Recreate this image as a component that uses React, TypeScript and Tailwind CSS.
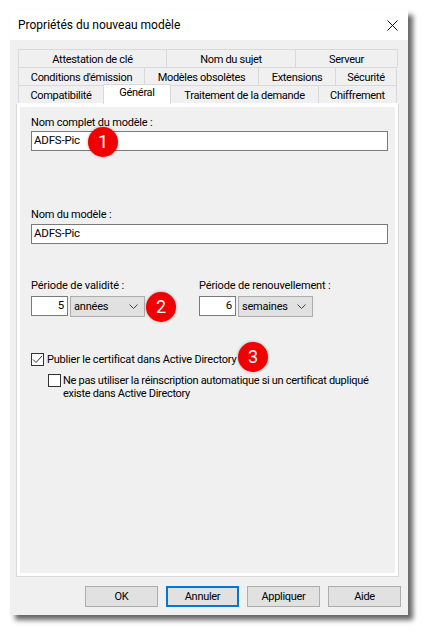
import React from "react";

const Tab = ({ label, w }: { label: string; w: string }) => (
  <div className={`${w} h-[18px] shrink-0 flex items-center justify-center pt-[1px] border-t border-l border-r border-[#d9d9d9] bg-[#f0f0f0] -mr-px text-[11px] tracking-[-0.3px] leading-none text-black`}>
    {label}
  </div>
);

const Badge = ({ n, cls }: { n: number; cls: string }) => (
  <div className={`absolute ${cls} w-[30px] h-[30px] rounded-full bg-[#f00000] text-white flex items-center justify-center text-[18px] tracking-normal leading-none shadow-[0_0_3px_rgba(0,0,0,0.35)]`}>
    {n}
  </div>
);

const Input = ({ value, w, right }: { value: string; w: string; right?: boolean }) => (
  <div className={`${w} h-[20px] border border-[#7a7a7a] bg-white flex items-center ${right ? "justify-end pr-[3px]" : "pl-[2px]"} text-[11.5px] tracking-[-0.2px] leading-none`}>
    {value}
  </div>
);

const Select = ({ value, w }: { value: string; w: string }) => (
  <div className={`${w} h-[21px] border border-[#adadad] bg-[#e1e1e1] flex items-center justify-between pl-[3px] pr-[6px] text-[11px] tracking-[-0.2px] leading-none`}>
    <span>{value}</span>
    <svg width="9" height="6" viewBox="0 0 9 6" fill="none" stroke="#444" strokeWidth="1"><path d="M0.5 0.5 L4.5 4.5 L8.5 0.5" /></svg>
  </div>
);

const Btn = ({ label, focus }: { label: string; focus?: boolean }) => (
  <div className={`w-[73px] h-[21px] flex items-center justify-center bg-[#e1e1e1] text-[11px] tracking-[-0.3px] leading-none ${focus ? "border-2 border-[#0078d7]" : "border border-[#adadad]"}`}>
    {label}
  </div>
);

export default function App() {
  return (
    <div className="w-[426px] h-[633px] bg-white pl-[10px] pt-[10px] overflow-hidden text-black" style={{ fontFamily: 'Roboto, "Liberation Sans", sans-serif' }}>
      <div className="w-[398px] h-[605px] bg-[#f0f0f0] flex flex-col shadow-[5px_5px_5px_rgba(0,0,0,0.6)]">
        <div className="h-[30px] shrink-0 bg-white flex items-center justify-between pl-[8px] pr-[10px] text-[12px]">
          <span>Propriétés du nouveau modèle</span>
          <svg width="11" height="11" viewBox="0 0 11 11" fill="none" stroke="#111" strokeWidth="1"><path d="M0.5 0.5 L10.5 10.5 M10.5 0.5 L0.5 10.5" /></svg>
        </div>
        <div className="pl-[8px] pt-[9px]">
          <div className="flex">
            <Tab label="Attestation de clé" w="w-[149px]" />
            <Tab label="Nom du sujet" w="w-[130px]" />
            <Tab label="Serveur" w="w-[103px]" />
          </div>
          <div className="flex">
            <Tab label="Conditions d'émission" w="w-[127px]" />
            <Tab label="Modèles obsolètes" w="w-[115px]" />
            <Tab label="Extensions" w="w-[78px]" />
            <Tab label="Sécurité" w="w-[62px]" />
          </div>
          <div className="flex items-end h-[18px] relative z-10">
            <Tab label="Compatibilité" w="w-[86px]" />
            <div className="w-[68px] h-[20px] shrink-0 -mr-px flex items-start pt-[2px] justify-center bg-white border-t border-l border-r border-[#d9d9d9] text-[11px] tracking-[-0.3px] leading-none mb-[-1px]">Général</div>
            <Tab label="Traitement de la demande" w="w-[149px]" />
            <Tab label="Chiffrement" w="w-[79px]" />
          </div>
        </div>
        <div className="ml-[6px] w-[383px] h-[474px] border border-[#d9d9d9] border-t-white bg-white p-[3px] shrink-0">
          <div className="relative h-full bg-[#f0f0f0] pl-[11px] pt-[8px] text-[11px] tracking-[-0.2px] leading-none">
            <div className="h-[14px] flex items-center">Nom complet du modèle :</div>
            <div className="mt-[2px]"><Input value="ADFS-Pic" w="w-[357px]" /></div>
            <div className="h-[14px] flex items-center mt-[56px]">Nom du modèle :</div>
            <div className="mt-[3px]"><Input value="ADFS-Pic" w="w-[357px]" /></div>
            <div className="flex mt-[34px]">
              <div className="w-[168px]">
                <div className="h-[14px] flex items-center tracking-[-0.1px]">Période de validité :</div>
                <div className="flex gap-[2px] mt-[4px]">
                  <Input value="5" w="w-[37px]" right />
                  <Select value="années" w="w-[75px]" />
                </div>
              </div>
              <div>
                <div className="h-[14px] flex items-center tracking-[-0.15px]">Période de renouvellement :</div>
                <div className="flex gap-[2px] mt-[4px]">
                  <Input value="6" w="w-[37px]" right />
                  <Select value="semaines" w="w-[75px]" />
                </div>
              </div>
            </div>
            <div className="flex items-center mt-[35px] h-[14px]">
              <div className="w-[13px] h-[13px] border border-[#333] bg-white flex items-center justify-center">
                <svg width="11" height="9" viewBox="0 0 11 9" fill="none" stroke="#333" strokeWidth="1"><path d="M1 4.5 L4 7.5 L10 1" /></svg>
              </div>
              <span className="ml-[3px]">Publier le certificat dans Active Directory</span>
            </div>
            <div className="flex items-start mt-[8px] ml-[17px]">
              <div className="w-[13px] h-[13px] border border-[#333] bg-white shrink-0" />
              <div className="ml-[2px] leading-[13px] tracking-[-0.3px] whitespace-nowrap">
                Ne pas utiliser la réinscription automatique si un certificat dupliqué<br />existe dans Active Directory
              </div>
            </div>
            <Badge n={1} cls="left-[68px] top-[20px]" />
            <Badge n={2} cls="left-[126px] top-[185px]" />
            <Badge n={3} cls="left-[218px] top-[235px]" />
          </div>
        </div>
        <div className="flex justify-end gap-[8px] pr-[7px] mt-[9px]">
          <Btn label="OK" />
          <Btn label="Annuler" focus />
          <Btn label="Appliquer" />
          <Btn label="Aide" />
        </div>
      </div>
    </div>
  );
}
